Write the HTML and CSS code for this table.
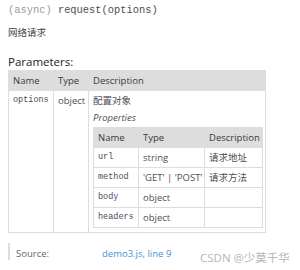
FILE: index.html
```html
<!DOCTYPE html>
<html>
<head>
<meta charset="utf-8">
<link rel="stylesheet" href="styles.css">
</head>
<body>
<div class="page">
  <h4 class="name"><span class="attribs">(async) </span>request(options)</h4>
  <div class="description">网络请求</div>
  <h5 class="section-title">Parameters:</h5>
  <table class="params outer">
    <colgroup><col class="o-name"><col class="o-type"><col class="o-desc"></colgroup>
    <thead>
      <tr><th>Name</th><th>Type</th><th>Description</th></tr>
    </thead>
    <tbody>
      <tr>
        <td class="code">options</td>
        <td>object</td>
        <td class="desc">
          <div class="desc-text">配置对象</div>
          <h6 class="props-title">Properties</h6>
          <table class="params inner">
            <colgroup><col class="i-name"><col class="i-type"><col class="i-desc"></colgroup>
            <thead>
              <tr><th>Name</th><th>Type</th><th>Description</th></tr>
            </thead>
            <tbody>
              <tr><td class="code">url</td><td>string</td><td>请求地址</td></tr>
              <tr><td class="code">method</td><td>'GET' | 'POST'</td><td>请求方法</td></tr>
              <tr><td class="code">body</td><td>object</td><td></td></tr>
              <tr><td class="code">headers</td><td>object</td><td></td></tr>
            </tbody>
          </table>
        </td>
      </tr>
    </tbody>
  </table>
  <dl class="details">
    <dt>Source:</dt>
    <dd><a href="#">demo3.js</a>, <a href="#">line 9</a></dd>
  </dl>
</div>
<div class="watermark">CSDN @少莫千华</div>
</body>
</html>
```
FILE: styles.css
```css
* { box-sizing: border-box; }
html, body { margin: 0; padding: 0; background: #fff; }
body {
  width: 300px;
  height: 270px;
  overflow: hidden;
  position: relative;
  font-family: "Open Sans", "Noto Sans CJK SC", sans-serif;
  color: #4d4e53;
}
.page { padding: 4px 8px 0 8px; }
.name {
  margin: 0;
  font: 400 10.4px/12px "Liberation Mono", monospace;
  color: #4d4e53;
}
.attribs { color: #9a9a9a; }
.description {
  margin-top: 11px;
  font-size: 9.5px;
  line-height: 12px;
  color: #444;
}
.section-title {
  margin: 16px 0 0 0;
  font-size: 11.5px;
  line-height: 14px;
  font-weight: 500;
  color: #222;
}
.params {
  border-collapse: collapse;
  table-layout: fixed;
  font-size: 9.5px;
  line-height: 11px;
}
.outer { width: 257px; margin-top: 1px; }
.inner { width: 169px; }
.o-name { width: 45px; }
.o-type { width: 35px; }
.o-desc { width: 177px; }
.i-name { width: 45px; }
.i-type { width: 66px; }
.i-desc { width: 58px; }
.params th, .params td {
  border: 1px solid #ddd;
  padding: 4px 4px;
  text-align: left;
  vertical-align: top;
  white-space: nowrap;
}
.params thead tr { background: #ddd; }
.params th { font-weight: 500; color: #3a3b40; }
.params td.code {
  font-family: "Liberation Mono", monospace;
  font-size: 8.5px;
}
.desc-text { line-height: 12px; }
.props-title {
  margin: 5px 0 0 0;
  font-size: 9.5px;
  line-height: 12px;
  font-style: italic;
  font-weight: 400;
}
.inner { margin-top: 3px; }
.details {
  display: flex;
  margin: 10px 0 0 0;
  padding: 5px 0 0 0;
  border-left: 2px solid #ddd;
  font-size: 9.5px;
  line-height: 12px;
}
.details dt { width: 92px; padding-left: 6px; color: #666; }
.details dd { margin: 0; color: #4593d5; }
.details a { color: #4593d5; text-decoration: none; }
.watermark {
  position: absolute;
  left: 200px;
  top: 250px;
  font-size: 11.5px;
  line-height: 16px;
  color: #b5b5b5;
}
```
